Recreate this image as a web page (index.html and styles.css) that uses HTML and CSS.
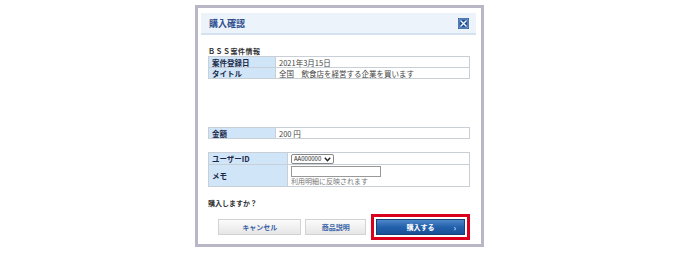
FILE: index.html
```html
<!DOCTYPE html>
<html lang="ja">
<head>
<meta charset="utf-8">
<link rel="stylesheet" href="styles.css">
</head>
<body>
<div class="modal">
  <div class="modal-head">
    <span class="modal-title">購入確認</span>
    <span class="close" aria-label="閉じる">
      <svg width="11" height="11" viewBox="0 0 11 11"><rect x="0" y="0" width="11" height="11" fill="#1d4f9a"/><rect x="1" y="1" width="9" height="9" fill="none" stroke="#9fb8dc" stroke-width="0.8"/><path d="M2.5 2.5 L8.5 8.5 M8.5 2.5 L2.5 8.5" stroke="#fff" stroke-width="1.3"/></svg>
    </span>
  </div>
  <div class="modal-body">
    <div class="section-title">ＢＳＳ案件情報</div>
    <table class="info">
      <tr><th>案件登録日</th><td>2021年3月15日</td></tr>
      <tr><th>タイトル</th><td>全国　飲食店を経営する企業を買います</td></tr>
    </table>
    <div class="spacer"></div>
    <table class="info">
      <tr><th>金額</th><td>200 円</td></tr>
    </table>
    <table class="info user">
      <tr><th>ユーザーID</th><td><span class="select">AA000000 <svg width="7" height="5" viewBox="0 0 7 5"><path d="M0.8 0.8 L3.5 3.8 L6.2 0.8" stroke="#222" stroke-width="1.4" fill="none"/></svg></span></td></tr>
      <tr class="memo"><th>メモ</th><td><span class="input"></span><div class="note">利用明細に反映されます</div></td></tr>
    </table>
    <div class="question">購入しますか？</div>
    <div class="buttons">
      <button class="btn gray cancel">キャンセル</button>
      <button class="btn gray desc">商品説明</button>
      <div class="highlight">
        <button class="btn blue">購入する<span class="arrow">›</span></button>
      </div>
    </div>
  </div>
</div>
</body>
</html>
```

FILE: styles.css
```css
html, body {
  margin: 0;
  padding: 0;
  background: #fff;
  font-family: "Noto Sans CJK JP", "Noto Sans", sans-serif;
}
.modal {
  margin: 5px 0 0 195px;
  width: 283px;
  height: 236px;
  border: 3px solid #b9b7c6;
  background: #fff;
  padding: 0;
  box-sizing: content-box;
}
.modal-head {
  margin: 5px 5px 0 3px;
  height: 20px;
  background: #edf3fb;
  border-bottom: 2px solid #d6e1ef;
  display: flex;
  align-items: center;
  justify-content: space-between;
  padding: 0 7px 0 8px;
}
.modal-title {
  font-size: 9px;
  font-weight: bold;
  color: #2f4f8d;
}
.close {
  display: flex;
}
.modal-body {
  padding: 0 11px 0 10px;
}
.section-title {
  margin-top: 12px;
  font-size: 7px;
  font-weight: bold;
  color: #333;
  letter-spacing: 0.5px;
  height: 9px;
  line-height: 9px;
}
table.info {
  width: 100%;
  border-collapse: collapse;
  font-size: 7.5px;
  line-height: 9px;
}
table.info th, table.info td {
  border: 1px solid #c9cfd6;
  padding: 0 3px;
  height: 10px;
  text-align: left;
}
table.info th {
  width: 60px;
  background: #d0e5f7;
  color: #1b2a4a;
  font-weight: bold;
}
table.info td {
  color: #444;
  background: #fff;
}
.spacer {
  height: 48px;
}
table.user {
  margin-top: 13px;
}
table.user th {
  width: 72px;
}
table.user tr:first-child th, table.user tr:first-child td {
  height: 11px;
}
.select {
  display: inline-flex;
  align-items: center;
  gap: 3px;
  border: 1px solid #888;
  border-radius: 2px;
  padding: 0 2px;
  height: 8px;
  font-size: 6px;
  line-height: 8px;
  color: #222;
}
.memo th, .memo td {
  height: 22px;
}
.input {
  display: block;
  width: 88px;
  height: 9px;
  border: 1px solid #999;
  margin-top: 1px;
}
.note {
  font-size: 7px;
  color: #777;
  line-height: 9px;
}
.question {
  margin-top: 12px;
  font-size: 7px;
  font-weight: bold;
  color: #333;
  height: 9px;
  line-height: 9px;
}
.buttons {
  display: flex;
  align-items: center;
  margin-top: 6px;
  padding-left: 10px;
}
.btn {
  font-family: inherit;
  font-size: 7px;
  font-weight: bold;
  height: 16px;
  padding: 0;
  cursor: pointer;
}
.btn.gray {
  background: linear-gradient(#fbfbfb, #e6e6e6);
  border: 1px solid #d2d2d2;
  color: #3b64a8;
}
.cancel {
  width: 88px;
}
.desc {
  width: 64px;
  margin-left: 4px;
}
.highlight {
  margin-left: 5px;
  border: 3px solid #d8001c;
  padding: 2px 2px;
  display: flex;
}
.btn.blue {
  width: 89px;
  background: linear-gradient(#4f86c9, #2361ac 50%, #184f97);
  border: 1px solid #16427c;
  color: #fff;
  position: relative;
}
.arrow {
  position: absolute;
  right: 8px;
  top: 2px;
  font-size: 8px;
  color: #cfdcf0;
}
```
